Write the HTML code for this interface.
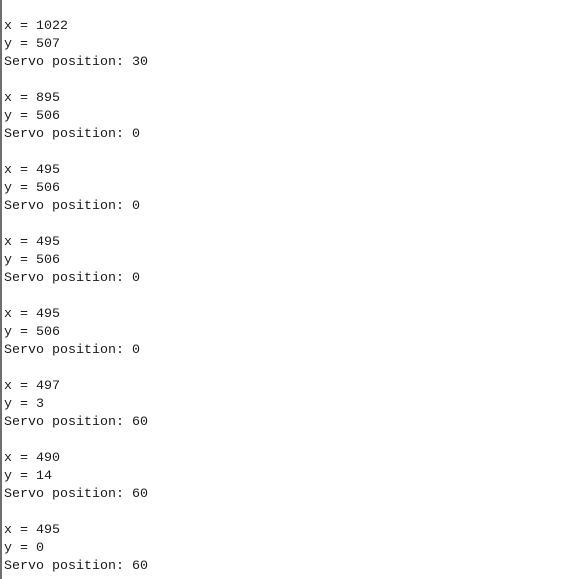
<!DOCTYPE html>
<html><head><style>
html,body{margin:0;padding:0;background:#fff;width:572px;height:579px;overflow:hidden}
.b{position:absolute;left:0;top:0;width:2px;height:579px;background:#6e6e6e}
pre{position:absolute;left:4px;top:18px;margin:0;font-family:"Courier New","Liberation Mono",monospace;font-size:13.33px;line-height:18px;color:#1a1a1a}
</style></head><body><div class="b"></div><pre>x = 1022
y = 507
Servo position: 30

x = 895
y = 506
Servo position: 0

x = 495
y = 506
Servo position: 0

x = 495
y = 506
Servo position: 0

x = 495
y = 506
Servo position: 0

x = 497
y = 3
Servo position: 60

x = 490
y = 14
Servo position: 60

x = 495
y = 0
Servo position: 60</pre></body></html>
